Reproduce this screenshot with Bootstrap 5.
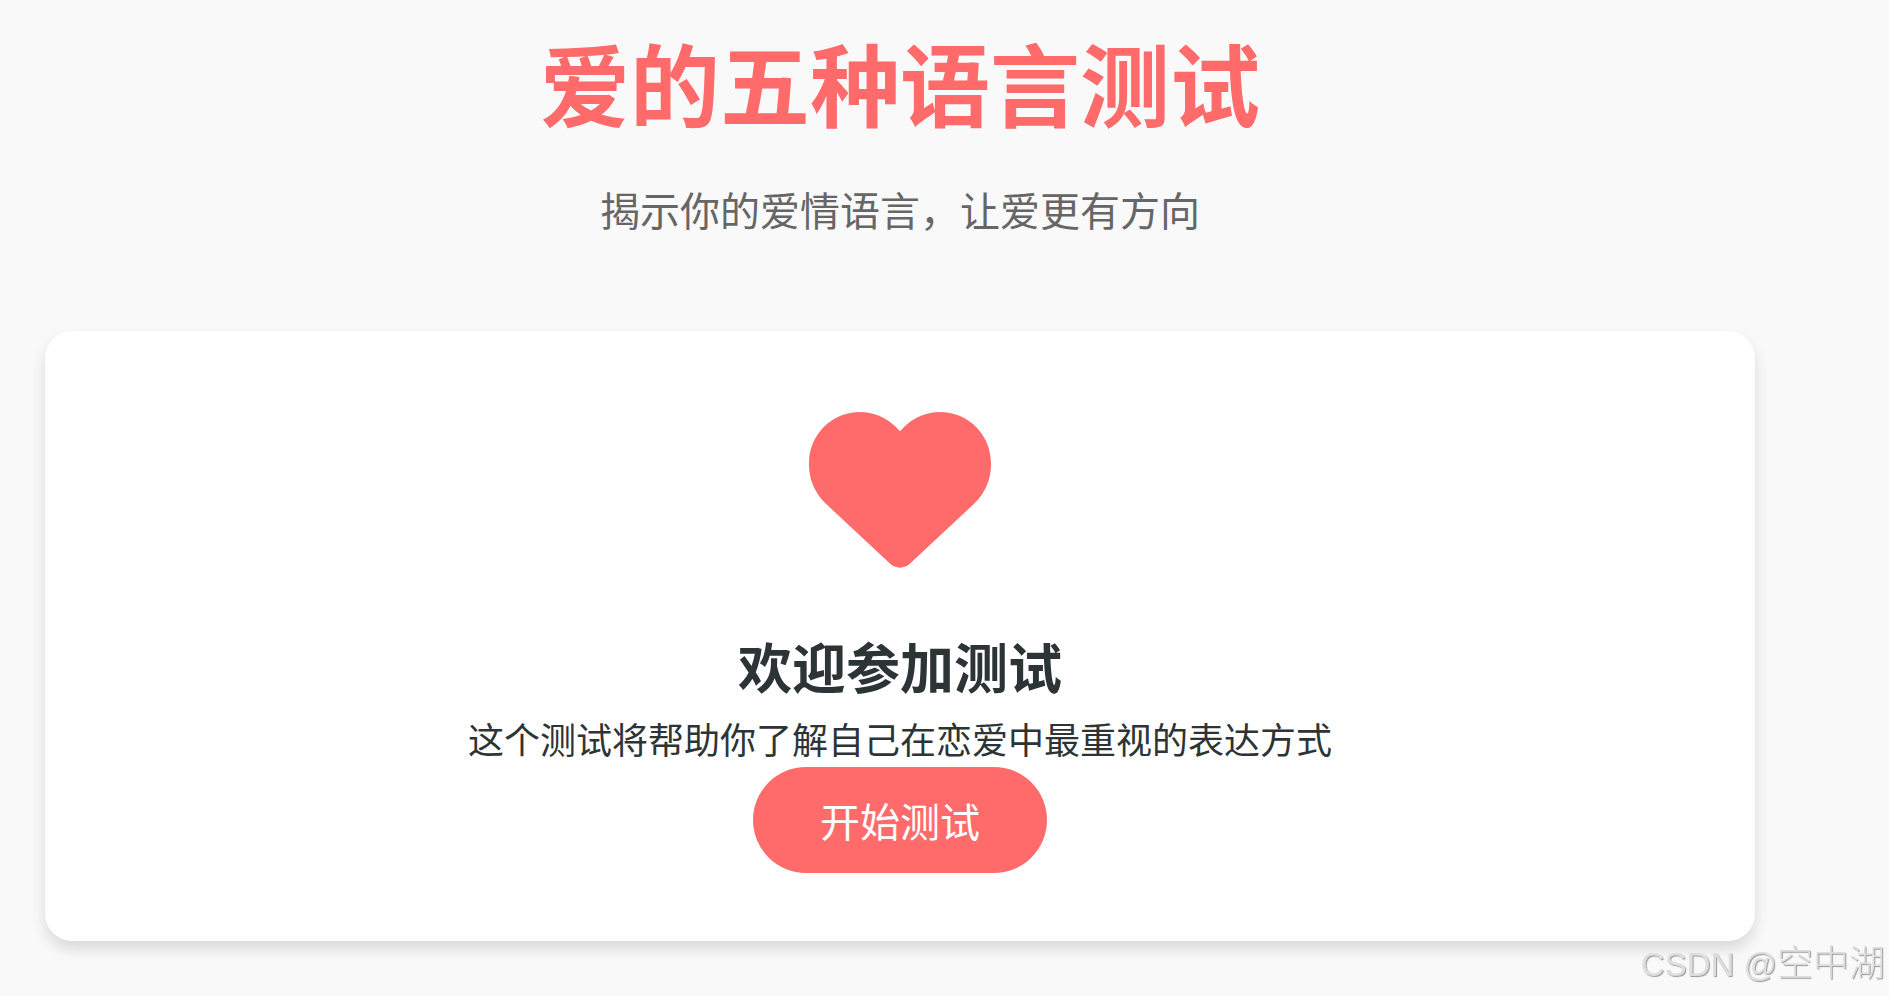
<!DOCTYPE html>
<html lang="zh-CN">
<head>
<meta charset="utf-8">
<meta name="viewport" content="width=device-width, initial-scale=1">
<title>爱的五种语言测试</title>
<link href="https://cdn.jsdelivr.net/npm/bootstrap@5.3.0/dist/css/bootstrap.min.css" rel="stylesheet">
<style>
body { background: #f9f9f9; color: #2d3436; font-family: "Noto Sans CJK SC", sans-serif; }
.quiz-page { padding: 21px 134px 40px 45px; }
.quiz-title { color: #ff6b6b; font-size: 90px; line-height: 120px; margin-bottom: 36px; }
.quiz-subtitle { color: #666; font-size: 40px; line-height: 64px; margin-bottom: 90px; }
.welcome-card { border-radius: 27px; padding: 66px 68px 68px; box-shadow: 0 9px 14px rgba(0, 0, 0, .1), 0 4px 20px rgba(0, 0, 0, .03); color: inherit; }
.heart-icon { width: 182px; height: 182px; fill: #ff6b6b; }
.welcome-title { font-size: 54px; line-height: 64px; margin-top: 55px; }
.welcome-text { font-size: 36px; line-height: 58px; margin-top: 11px; }
.start-btn { --bs-btn-color: #fff; --bs-btn-bg: #ff6b6b; --bs-btn-hover-color: #fff; --bs-btn-hover-bg: #f75c5c; --bs-btn-active-color: #fff; --bs-btn-active-bg: #ee5050; font-size: 40px; line-height: 56px; padding: 25px 67px; border: 0; }
.watermark { right: 4px; bottom: 9px; color: #dedede; font-family: "Liberation Sans", "Noto Sans CJK SC", sans-serif; font-size: 33px; line-height: 44px; text-shadow: 1px 1px 1px #999; }
.watermark span { font-family: "Noto Sans CJK SC", sans-serif; font-size: 36px; font-weight: 300; }
</style>
</head>
<body>
<main class="quiz-page text-center">
  <header>
    <h1 class="quiz-title fw-bold">爱的五种语言测试</h1>
    <p class="quiz-subtitle">揭示你的爱情语言，让爱更有方向</p>
  </header>
  <section class="welcome-card card border-0 align-items-center">
    <svg class="heart-icon" viewBox="0 0 512 512" aria-hidden="true"><path d="M47.6 300.4L228.3 469.1c7.5 7 17.4 10.9 27.7 10.9s20.2-3.9 27.7-10.9L464.4 300.4c30.4-28.3 47.6-68 47.6-109.5v-5.8c0-69.9-50.5-129.5-119.4-141C347 36.5 300.6 51.4 268 84L256 96 244 84c-32.6-32.6-79-47.5-124.6-39.9C50.5 55.6 0 115.2 0 185.1v5.8c0 41.5 17.2 81.2 47.6 109.5z"/></svg>
    <h2 class="welcome-title fw-bold mb-0">欢迎参加测试</h2>
    <p class="welcome-text mb-0">这个测试将帮助你了解自己在恋爱中最重视的表达方式</p>
    <button type="button" class="start-btn btn rounded-pill">开始测试</button>
  </section>
</main>
<div class="watermark position-fixed text-nowrap">CSDN @<span>空中湖</span></div>
<script src="https://cdn.jsdelivr.net/npm/bootstrap@5.3.0/dist/js/bootstrap.bundle.min.js"></script>
</body>
</html>
